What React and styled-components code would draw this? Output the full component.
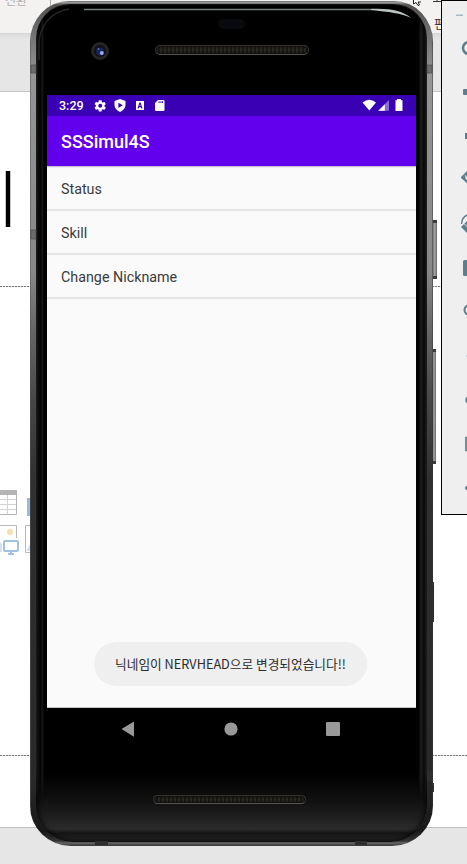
import React from "react";
import styled, { createGlobalStyle } from "styled-components";

const Global = createGlobalStyle`
  * { box-sizing: border-box; }
  body { margin: 0; overflow: hidden; background: #fff; }
`;

/* ---------- editor behind the emulator ---------- */
const Desktop = styled.div`
  position: relative;
  width: 467px;
  height: 864px;
  overflow: hidden;
  font-family: Roboto, "Noto Sans CJK KR", sans-serif;
`;
const Editor = styled.div`
  display: flex;
  flex-direction: column;
  height: 100%;
`;
const Ribbon = styled.div`
  height: 33px;
  flex: none;
  display: flex;
  justify-content: space-between;
  background: #f3f2f1;
  font: 12px/14px "Noto Sans CJK KR", sans-serif;
`;
const RibbonFaded = styled.span`
  width: 51px;
  height: 40px;
  padding-left: 5px;
  margin-top: -7px;
  color: #b0aeac;
  border-right: 1px solid #aaa;
`;
const RibbonLabel = styled.span`
  width: 33px;
  margin-top: 17px;
  color: #333;
`;
const Gap = styled.div`
  height: 59px;
  flex: none;
  background: linear-gradient(#d8d8d8, #e6e6e6 6px);
  border-bottom: 1px solid #c4c4c4;
`;
const Slide = styled.div`
  flex: 1;
  display: flex;
  flex-direction: column;
  background: #fff;
`;
const Caret = styled.div`
  width: 6px;
  height: 56px;
  margin: 79px 0 0 5px;
  background: #000;
  border: solid #c4c4c4;
  border-width: 0 1px;
`;
const Guide = styled.div`
  height: 1px;
  margin-top: ${(p) => p.$top}px;
  background: repeating-linear-gradient(90deg, #777 0 2px, #ddd 2px 3px);
`;
const Placeholder = styled.svg`
  display: block;
  width: 60px;
  height: 70px;
  margin-top: 203px;
`;
const Footer = styled.div`
  height: 37px;
  flex: none;
  background: #e6e6e6;
  border-top: 1px solid #c0c0c0;
`;
const CursorIcon = styled.svg`
  position: absolute;
  left: 412px;
  top: 0;
  width: 30px;
  height: 7px;
`;

/* ---------- handset ---------- */
const SideKey = styled.div`
  position: absolute;
  left: ${(p) => p.$x}px;
  top: ${(p) => p.$y}px;
  width: ${(p) => p.$w}px;
  height: ${(p) => p.$h}px;
  background: ${(p) => p.$dark ? "#292929" : "linear-gradient(90deg, #777, #777 35%, #a2a2a2 60%, #8c8c8c 80%, #5c5c5c)"};
  border: solid #3c3c3c;
  border-width: 3px 0;
`;
const Phone = styled.div`
  position: absolute;
  left: 30px;
  top: 1px;
  width: 403px;
  height: 845px;
  padding: 3px 6px 4px;
  border-radius: 39px 39px 41px 41px / 41px 41px 40px 40px;
  background:
    linear-gradient(#444, #aaa 1px, #686868 3px, transparent 4px),
    linear-gradient(90deg, #555 0, transparent 1px, transparent 402px, #333),
    linear-gradient(#4b4b4b 0, #6f6f6f 30px, #959595 75px, #888 270px, #666 330px, #474747 400px, #303030 480px, #292929 780px, #181818 830px, #333 840px, #666 842px, #333);
`;
const Bezel = styled.div`
  height: 100%;
  display: flex;
  flex-direction: column;
  border-radius: 34px 34px 37px 37px;
  overflow: hidden;
  background:
    linear-gradient(transparent 770px, #0f0f0f 794px, #1c1c1c 810px, #2c2c2c 825px, #151515 829px, #222 835px),
    linear-gradient(90deg, #383838 0, #111 2px, #030303 5px, #1c1c1c 6px, #020202 8px, #000 11px, #000 380px, #030303 383px, #202020 385px, #090909 388px, #383838);
  box-shadow: inset 0 0 7px #000, inset 0 1px 1px #222;
`;
const Forehead = styled.div`
  position: relative;
  height: 91px;
  flex: none;
`;
const Gloss = styled.svg`
  position: absolute;
  inset: 0;
  width: 391px;
  height: 91px;
`;
const Speaker = styled.div`
  width: ${(p) => p.$w}px;
  height: ${(p) => p.$h}px;
  margin: ${(p) => p.$top}px 0 0 ${(p) => p.$left}px;
  border-radius: 5px;
  border: 1px solid #34322f;
  border-bottom-color: #55534f;
  background: repeating-linear-gradient(90deg, #2a2722 0 2px, #1b1916 2px 4px);
  box-shadow: inset 0 0 2px 1px #0c0c0b;
  flex: none;
`;
const Screen = styled.main`
  width: 369px;
  height: 613px;
  flex: none;
  margin-left: 11px;
  display: flex;
  flex-direction: column;
  background: #fafafa;
  border-bottom: 1px solid #c4c4c4;
`;
const StatusBar = styled.div`
  height: 21px;
  flex: none;
  display: flex;
  align-items: center;
  padding-left: 12px;
  background: #3a00b3;
  color: #fff;
  font: 500 12.5px/21px Roboto, sans-serif;
`;
const Clock = styled.span`
  width: 34px;
`;
const StatusIcons = styled.svg`
  display: block;
  width: ${(p) => p.$w}px;
  height: 21px;
  margin-left: ${(p) => p.$ml || 0}px;
`;
const AppBar = styled.header`
  height: 50px;
  flex: none;
  padding: 1px 14px 0;
  background: #6200ee;
  color: #fff;
  font: 500 18px/50px Roboto, sans-serif;
`;
const List = styled.ul`
  margin: 0;
  padding: 0;
  list-style: none;
  box-shadow: inset 0 1px #c9c0da, inset 0 2px #ededf0;
`;
const Row = styled.li`
  height: 44px;
  padding-left: 14px;
  border-bottom: 2px solid #e5e5e5;
  color: #3a3a3a;
  font: 400 14.3px/44px Roboto, sans-serif;
  margin-top: ${(p) => (p.$first ? 1 : 0)}px;
`;
const Toast = styled.div`
  width: 273px;
  height: 44px;
  margin: auto 0 21px 47px;
  border-radius: 22px;
  background: #efefef;
  color: #2c2c2c;
  text-align: center;
  white-space: nowrap;
  font: 400 12.7px/44px "Noto Sans CJK KR", sans-serif;
`;
const NavBar = styled.svg`
  display: block;
  width: 391px;
  height: 42px;
  flex: none;
`;
/* antenna seams along the metal frame */
const SeamLayer = styled.svg`
  position: absolute;
  inset: 0;
  width: 403px;
  height: 845px;
`;

/* ---------- emulator tool window ---------- */
const ToolWindow = styled.aside`
  position: absolute;
  left: 441px;
  top: 0;
  width: 30px;
  height: 515px;
  border: 1px solid #000;
  background: #efefef;
`;
const ToolIcons = styled.svg`
  display: block;
  width: 25px;
  height: 513px;
`;

const rows = ["Status", "Skill", "Change Nickname"];

function Seams() {
  return (
    <SeamLayer viewBox="30 1 403 845">
      <g fill="#6c6c6c" stroke="#4a4a4a" strokeWidth=".7">
        <rect x="31" y="65" width="5" height="8" />
        <rect x="427" y="65" width="5" height="8" />
        <rect x="31" y="230" width="5" height="9" />
      </g>
      <g fill="#2e2e2e">
        <rect x="95" y="841" width="13" height="4" />
        <rect x="355" y="841" width="12" height="4" />
        <rect x="427" y="771" width="6" height="10" />
      </g>
    </SeamLayer>
  );
}

export default function App() {
  return (
    <Desktop>
      <Global />
      <Editor>
        <Ribbon>
          <RibbonFaded>전환</RibbonFaded>
          <RibbonLabel>편집</RibbonLabel>
        </Ribbon>
        <Gap />
        <Slide>
          <Caret />
          <Guide $top={59} />
          <Placeholder viewBox="0 490 60 70">
            <path d="M0 490H17V495H0Z" fill="#b4b4b4" />
            <path d="M0 499.5H16M0 504.5H16M0 509.5H16M7.5 495V514" stroke="#d2d2d2" fill="none" />
            <path d="M16.5 490V514.5H0" stroke="#b4b4b4" fill="none" />
            <path d="M0 525.5H16.5V538M30 525.5H25.5V552.5H30" stroke="#b9b9b9" fill="none" />
            <circle cx="10" cy="532" r="3" fill="#f6dfb2" />
            <path d="M0 542L2 544V552H0M27 549L30 544V551H27Z" fill="#d5e1f0" />
            <rect x="4" y="541" width="14" height="10" rx="1" fill="#fff" stroke="#a2c1df" strokeWidth="2" />
            <path d="M8 554H14M11 552V555" stroke="#a2c1df" strokeWidth="2" />
            <path d="M27 498H31V516H27Z" fill="#9cbada" />
          </Placeholder>
          <Guide $top={195} />
        </Slide>
        <Footer />
      </Editor>
      <CursorIcon viewBox="412 0 30 7">
        <path d="M413.5 0V4L416 2.5L418 5.5L419.5 5L418 2H421" fill="#fff" stroke="#222" />
        <path d="M433 1.5H441M437 0V2" stroke="#333" />
      </CursorIcon>

      <SideKey $x={431} $y={220} $w={6} $h={59} />
      <SideKey $x={431} $y={349} $w={5} $h={115} />
      <SideKey $x={431} $y={582} $w={3} $h={40} $dark />
      <SideKey $x={431} $y={783} $w={3} $h={9} $dark />
      <Phone>
        <Bezel>
          <Forehead>
            <Gloss viewBox="36 4 391 91">
              <path d="M84 9.5H374" stroke="#778280" strokeWidth="1.3" />
              <path d="M371 9C390 8 403 11 411 18C401 13 389 12 371 10Z" fill="#b9c5c2" />
              <path d="M39 60V43C40 25 51 12 69 9" stroke="#262626" strokeWidth="1.5" fill="none" />
              <rect x="218" y="19" width="27" height="10" rx="5" fill="#090a0e" />
              <circle cx="100" cy="51" r="9" fill="#252526" />
              <circle cx="100" cy="51" r="6" fill="#101018" />
              <circle cx="100" cy="51.5" r="4" fill="#182653" />
              <circle cx="101.8" cy="53" r="2" fill="#91a9ff" />
              <circle cx="98.5" cy="49" r="1" fill="#5271be" />
            </Gloss>
            <Speaker $w={154} $h={10} $top={41} $left={119} />
          </Forehead>
          <Screen>
            <StatusBar>
              <Clock>3:29</Clock>
              <StatusIcons $w={75} viewBox="93 95 75 21" fill="#fff">
                <g transform="translate(93.4 99) scale(.57)">
                  <path fillRule="evenodd" d="M19.4 13c.1-.7.1-1.3 0-2l2.1-1.6c.2-.1.2-.4.1-.6l-2-3.5c-.1-.2-.4-.3-.6-.2l-2.5 1c-.5-.4-1.1-.7-1.7-1L14.4 2.4c0-.2-.2-.4-.5-.4h-4c-.2 0-.4.2-.5.4L9 5.1c-.6.3-1.2.6-1.7 1l-2.5-1c-.2-.1-.5 0-.6.2l-2 3.5c-.1.2-.1.5.1.6L4.4 11v2l-2.1 1.6c-.2.1-.2.4-.1.6l2 3.5c.1.2.3.4.6.2l2.5-1c.5.4 1.1.7 1.7 1l.4 2.7c.1.2.3.4.5.4h4c.3 0 .5-.2.5-.4l.4-2.7c.6-.3 1.2-.6 1.7-1l2.5 1c.2.1.5 0 .6-.2l2-3.5c.1-.2.1-.5-.1-.6zM12 15.5a3.5 3.5 0 1 1 0-7 3.5 3.5 0 0 1 0 7z" />
                </g>
                <path fillRule="evenodd" d="M120 99L125.5 101V105C125.5 108 123.3 110.5 120 112C116.7 110.5 114.5 108 114.5 105V101ZM118.4 102.7V108L122.8 105.3Z" />
                <path fillRule="evenodd" d="M136 101H144V110H136ZM137.5 108.5H138.7L139.2 107.2H140.9L141.3 108.5H142.5L140.6 102.6H139.4ZM139.5 106.1L140 104.3L140.6 106.1Z" />
                <path fillRule="evenodd" d="M158 100H163.2Q164.5 100 164.5 101.3V110Q164.5 111 163.3 111H156.2Q155 111 155 110V103ZM158.6 101.3V103.1H159.6V101.3ZM160.4 101.3V103.1H161.4V101.3ZM162 101.3V103.1H163V101.3Z" />
              </StatusIcons>
              <StatusIcons $w={46} $ml={192} viewBox="360 95 46 21" fill="#fff">
                <path d="M362.5 102.5Q369.3 97 376 102.5L369.3 110.5Z" />
                <path d="M389 100V110.7H378.3Z" opacity=".42" />
                <path d="M384.8 104.2V110.7H378.3Z" />
                <path d="M397 99H401V100.2H402.5V111H395.5V100.2H397Z" />
              </StatusIcons>
            </StatusBar>
            <AppBar>SSSimul4S</AppBar>
            <List>
              {rows.map((label, i) => <Row key={label} $first={i === 0}>{label}</Row>)}
            </List>
            <Toast>닉네임이 NERVHEAD으로 변경되었습니다!!</Toast>
          </Screen>
          <NavBar viewBox="36 708 391 42" fill="#999">
            <path d="M121.5 729L134 721.5V736.7Z" />
            <circle cx="231" cy="729" r="6.6" />
            <rect x="326" y="722" width="14" height="14" rx="1" />
          </NavBar>
          <Speaker $w={153} $h={9} $top={45} $left={117} />
        </Bezel>
        <Seams />
      </Phone>
      <ToolWindow>
        <ToolIcons viewBox="442 1 25 513" fill="#607d8b">
          <path d="M456 14.5H463V16H456Z" fill="#a9b7be" />
          <path d="M469 42A6 6 0 0 0 469 54" fill="none" stroke="#607d8b" strokeWidth="2.5" />
          <rect x="463" y="89" width="7" height="6" rx="1" />
          <rect x="465" y="133" width="4" height="6" />
          <path d="M461 177L468 170V184L461 178Z" />
          <path d="M464.8 174.5L468 178L466 180" fill="#efefef" />
          <path d="M461.5 224Q462 216 469 214.5" fill="none" stroke="#607d8b" strokeWidth="1.4" />
          <path d="M461 227L468 220V234Z" />
          <path d="M464 223.5L468 227.5" stroke="#efefef" />
          <rect x="463" y="260" width="9" height="16" rx="1.5" />
          <circle cx="469" cy="310" r="4.5" fill="none" stroke="#607d8b" strokeWidth="2" />
          <path d="M466 356H468" stroke="#abb9bf" />
          <circle cx="470" cy="400" r="4.7" />
          <path d="M469 437.5H466V450.5H469" fill="none" stroke="#607d8b" strokeWidth="1.7" />
          <circle cx="467" cy="488" r="2" />
        </ToolIcons>
      </ToolWindow>
    </Desktop>
  );
}
